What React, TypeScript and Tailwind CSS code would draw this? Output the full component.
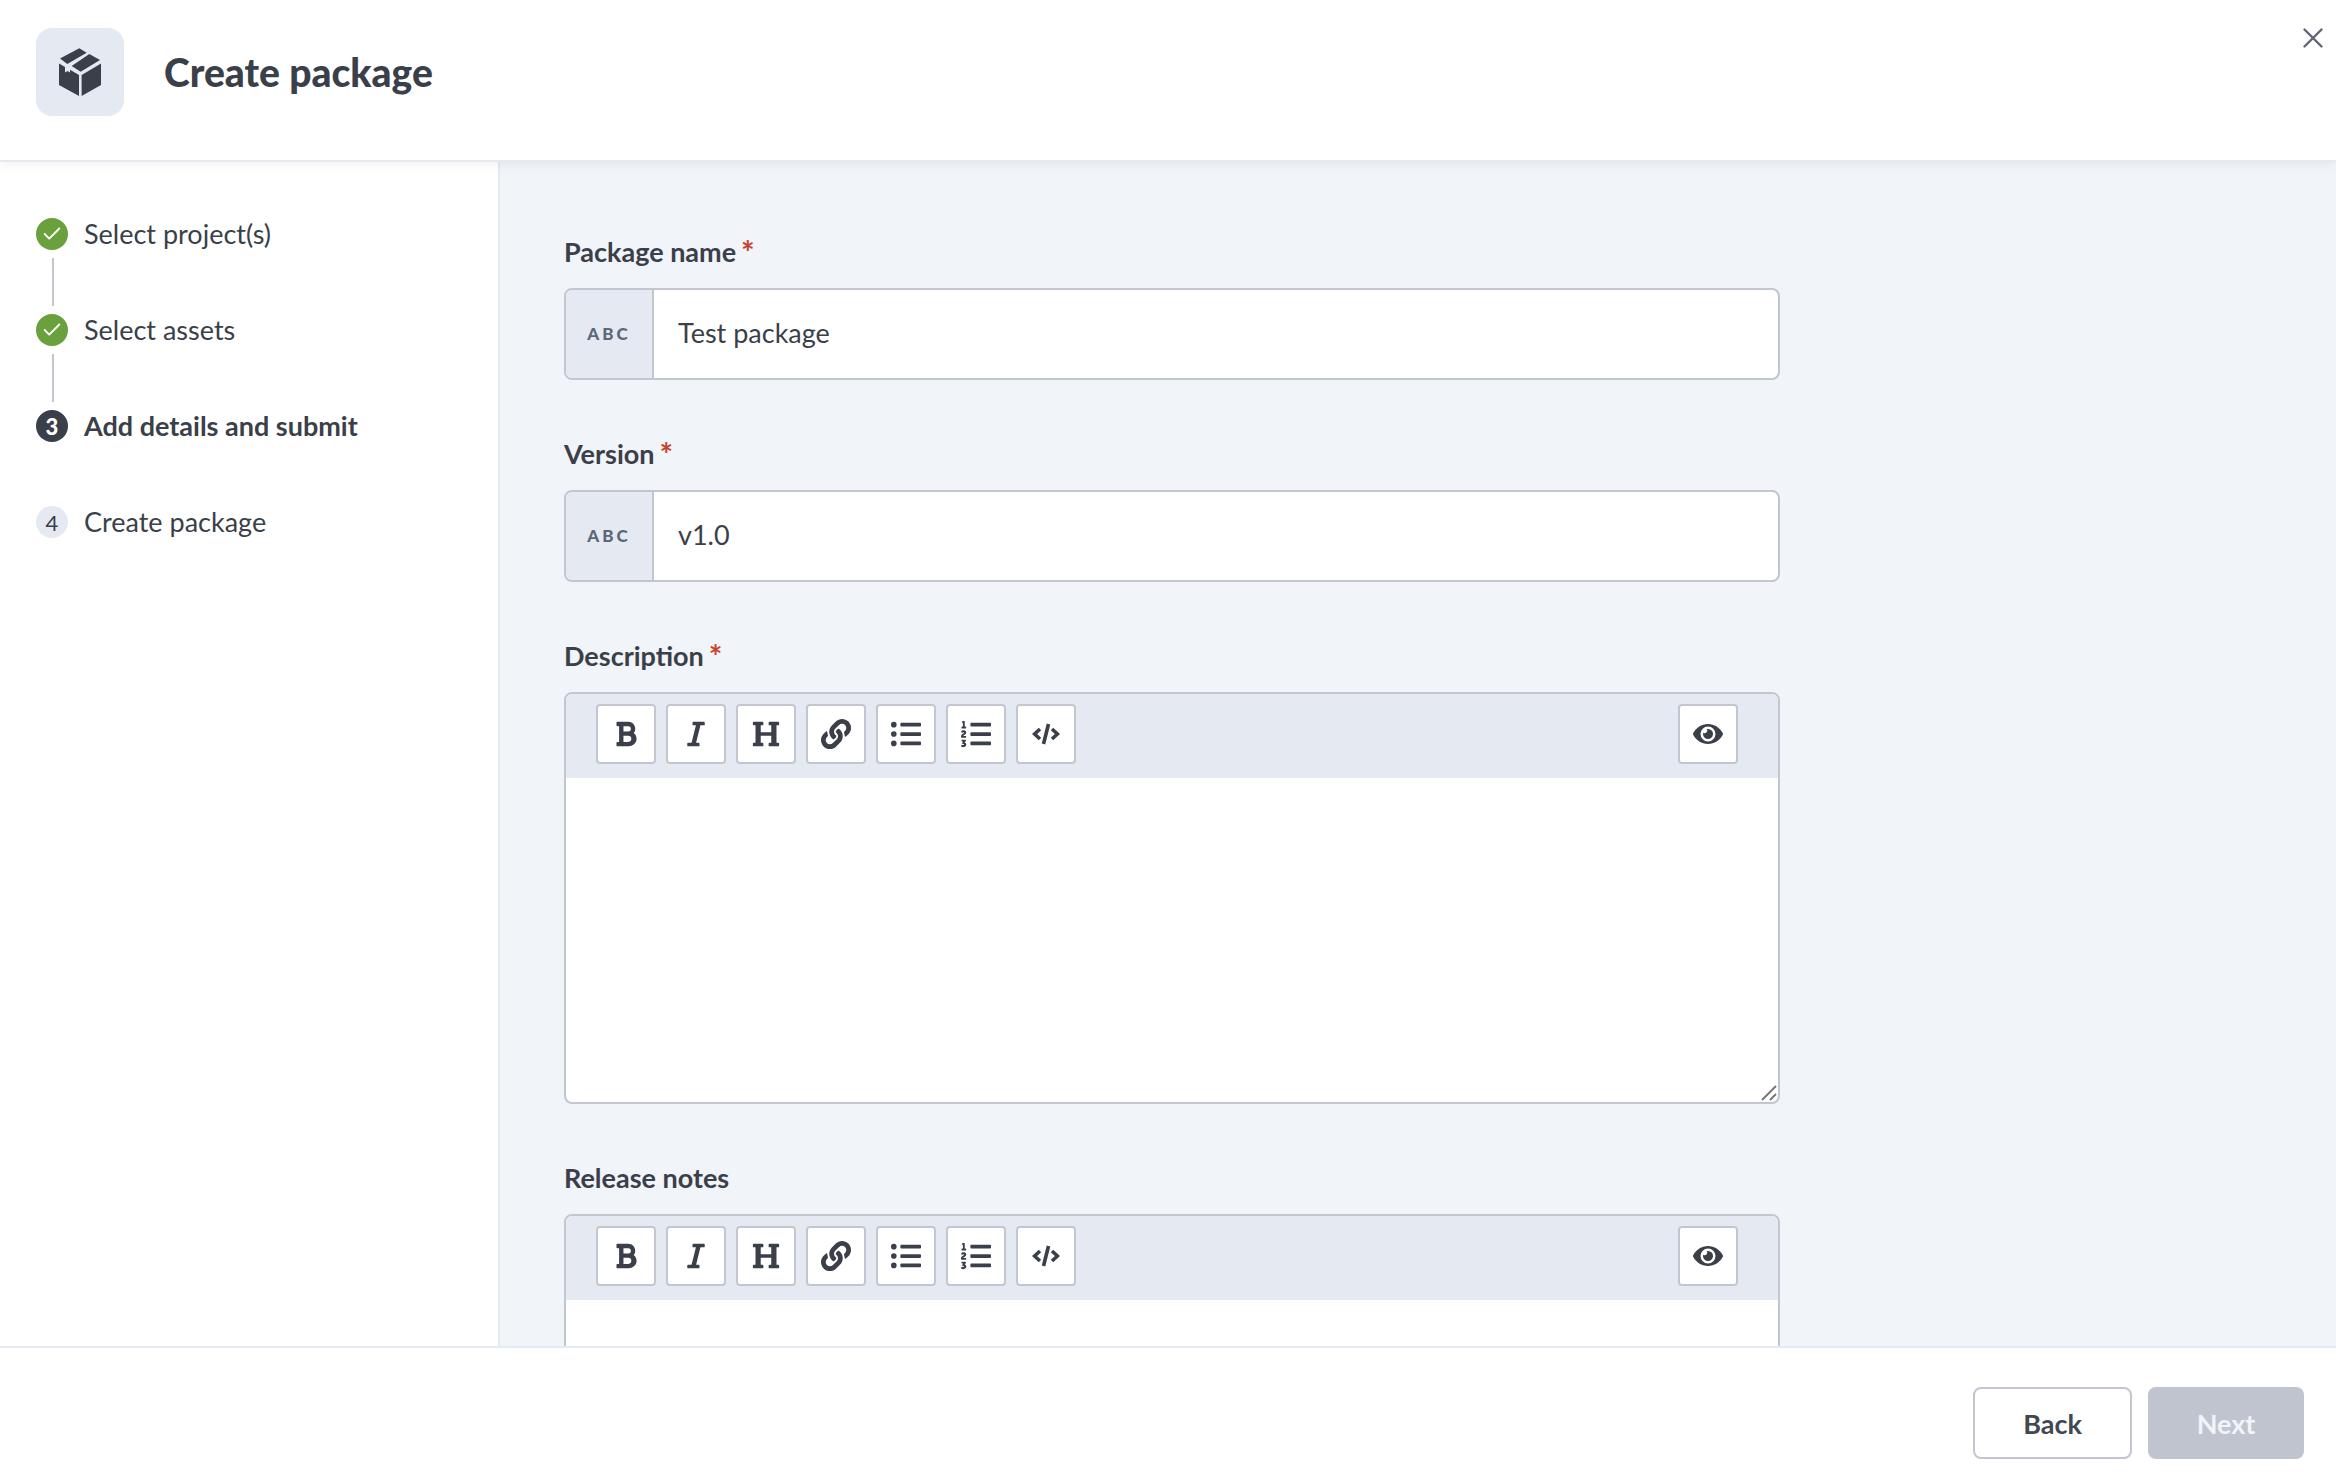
import { FaBold, FaItalic, FaHeading, FaLink, FaListUl, FaListOl, FaEye } from "react-icons/fa";
import { Check, X } from "lucide-react";
import type { ReactNode } from "react";

const font = "font-['Lato','Noto_Sans',sans-serif]";

function PackageIcon() {
  return (
    <svg width="42" height="48" viewBox="0 0 42 48" fill="#3a3f49">
      <path d="M0 15.5 L6 19 V24.5 L8.5 23 L11 24.5 V21.8 L20 27 V48 L0 37 Z" />
      <path d="M22.6 27 L42 15.5 V37 L22.6 48 Z" />
      <path d="M1 10.5 L20.3 0.3 L27.7 4.7 L8.3 16 Z" />
      <path d="M30.3 6 L41 12 L21.7 23.7 L12.7 18 Z" />
    </svg>
  );
}

function CodeIcon() {
  return (
    <svg width="28" height="22" viewBox="0 0 28 22" fill="none" stroke="#3a3f49" strokeWidth="3.6">
      <path d="M8 6 L2.6 11 L8 16" />
      <path d="M20 6 L25.4 11 L20 16" />
      <path d="M16.5 1 L11.5 21" />
    </svg>
  );
}

function Step({ state, num, label, line }: { state: "done" | "active" | "todo"; num?: number; label: string; line?: boolean }) {
  return (
    <div className="h-[96px]">
      <div className="flex items-center h-[32px] gap-[16px]">
        {state === "done" && (
          <span className="w-[32px] h-[32px] rounded-full bg-[#6aa13d] flex items-center justify-center">
            <Check size={22} color="#fff" strokeWidth={2} />
          </span>
        )}
        {state === "active" && (
          <span className="w-[32px] h-[32px] rounded-full bg-[#3a3f49] flex items-center justify-center text-white text-[22px] font-black">{num}</span>
        )}
        {state === "todo" && (
          <span className="w-[32px] h-[32px] rounded-full bg-[#e5e9f2] flex items-center justify-center text-[#3a3f49] text-[22px]">{num}</span>
        )}
        <span className={`text-[27px] leading-[32px] text-[#3a3f49] ${state === "active" ? "font-bold" : ""}`}>{label}</span>
      </div>
      {line && <div className="ml-[16px] mt-[8px] w-[2px] h-[48px] bg-[#c2c6d1]" />}
    </div>
  );
}

function Label({ text, required }: { text: string; required?: boolean }) {
  return (
    <div className="h-[36px] flex items-center text-[27px] font-bold text-[#3a3f49]">
      {text}
      {required && <span className="ml-[5px] text-[32px] leading-[32px] text-[#c8432b] mt-[2px]">*</span>}
    </div>
  );
}

function TextField({ label, value }: { label: string; value: string }) {
  return (
    <div className="mb-[56px]">
      <Label text={label} required />
      <div className="mt-[18px] h-[92px] flex rounded-[8px] border-2 border-[#c2c6d1] bg-white overflow-hidden">
        <div className="w-[88px] bg-[#e5e9f2] border-r-2 border-[#c2c6d1] flex items-center justify-center text-[17px] font-black tracking-[3px] text-[#5c677a]">ABC</div>
        <div className="pl-[24px] pb-[2px] flex items-center text-[27px] text-[#3a3f49]">{value}</div>
      </div>
    </div>
  );
}

function ToolButton({ children }: { children: ReactNode }) {
  return (
    <div className="w-[60px] h-[60px] rounded-[4px] border-2 border-[#c2c6d1] bg-white flex items-center justify-center text-[#3a3f49]">{children}</div>
  );
}

function Toolbar() {
  return (
    <div className="h-[84px] bg-[#e5e9f2] flex items-start justify-between pt-[10px] pl-[30px] pr-[40px]">
      <div className="flex gap-[10px]">
        <ToolButton><FaBold size={28} /></ToolButton>
        <ToolButton><FaItalic size={28} /></ToolButton>
        <ToolButton><FaHeading size={28} /></ToolButton>
        <ToolButton><FaLink size={30} /></ToolButton>
        <ToolButton><FaListUl size={30} /></ToolButton>
        <ToolButton><FaListOl size={30} /></ToolButton>
        <ToolButton><CodeIcon /></ToolButton>
      </div>
      <ToolButton><FaEye size={30} /></ToolButton>
    </div>
  );
}

export default function App() {
  return (
    <div className={`w-[2336px] h-[1476px] flex flex-col bg-white overflow-hidden ${font}`}>
      <header className="relative z-10 h-[162px] shrink-0 flex items-start pt-[28px] pl-[36px] gap-[40px] border-b-2 border-[#e5e9f0] bg-white shadow-[0_2px_10px_rgba(60,70,90,0.08)]">
        <div className="w-[88px] h-[88px] rounded-[16px] bg-[#e5e9f2] flex items-center justify-center">
          <PackageIcon />
        </div>
        <h1 className="h-[88px] flex items-center text-[39px] font-black text-[#3a3f49]">Create package</h1>
        <button className="absolute right-[6px] top-[21px] w-[34px] h-[34px] flex items-center justify-center text-[#5c677a]">
          <X size={34} strokeWidth={1.7} />
        </button>
      </header>
      <div className="flex flex-1 min-h-0">
        <aside className="w-[500px] shrink-0 border-r-2 border-[#e5e9f0] pl-[36px] pt-[56px]">
          <Step state="done" label="Select project(s)" line />
          <Step state="done" label="Select assets" line />
          <Step state="active" num={3} label="Add details and submit" />
          <Step state="todo" num={4} label="Create package" />
        </aside>
        <main className="flex-1 bg-[#f1f4f9] pl-[64px] pt-[72px] overflow-hidden">
          <div className="w-[1216px]">
            <TextField label="Package name" value="Test package" />
            <TextField label="Version" value="v1.0" />
            <div className="mb-[56px]">
              <Label text="Description" required />
              <div className="mt-[18px] h-[412px] rounded-[8px] border-2 border-[#c2c6d1] bg-white overflow-hidden relative">
                <Toolbar />
                <svg className="absolute right-[1px] bottom-[1px]" width="16" height="16" viewBox="0 0 16 16" stroke="#777" strokeWidth="2">
                  <path d="M1 15 L15 1" />
                  <path d="M9 15 L15 9" />
                </svg>
              </div>
            </div>
            <div>
              <Label text="Release notes" />
              <div className="mt-[18px] h-[300px] rounded-[8px] border-2 border-[#c2c6d1] bg-white overflow-hidden">
                <Toolbar />
              </div>
            </div>
          </div>
        </main>
      </div>
      <footer className="relative z-10 h-[130px] shrink-0 border-t-2 border-[#e5e9f0] bg-white flex items-start justify-end gap-[16px] pt-[39px] pr-[32px]">
        <button className="w-[159px] h-[72px] pt-[2px] rounded-[8px] border-2 border-[#c2c6d1] bg-white text-[27px] font-bold text-[#414852]">Back</button>
        <button className="w-[156px] h-[72px] pt-[2px] rounded-[8px] bg-[#bfc4cf] text-[27px] font-bold text-[#f1f4f9]">Next</button>
      </footer>
    </div>
  );
}
